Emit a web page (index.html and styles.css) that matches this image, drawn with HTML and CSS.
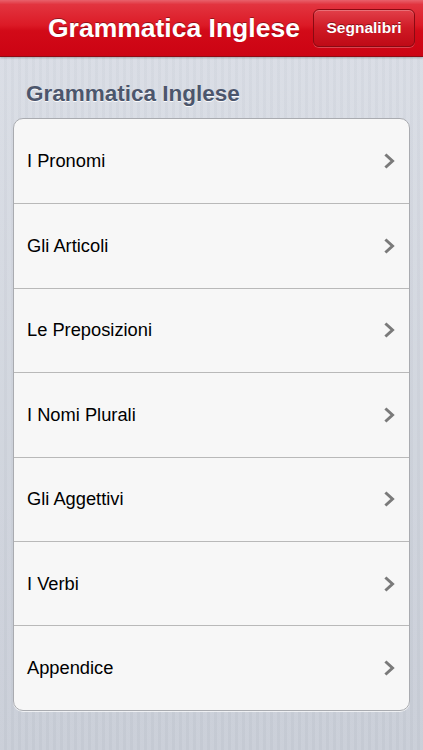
FILE: index.html
```html
<!DOCTYPE html>
<html>
<head>
<meta charset="utf-8">
<link rel="stylesheet" href="styles.css">
</head>
<body>
<div class="screen">
  <header class="navbar">
    <h1 class="nav-title">Grammatica Inglese</h1>
    <button class="nav-btn">Segnalibri</button>
  </header>
  <main class="content">
    <h2 class="section-title">Grammatica Inglese</h2>
    <ul class="group">
      <li class="row"><span>I Pronomi</span><svg class="chev" viewBox="0 0 12 16"><path d="M2.5 2.5 L8.5 8 L2.5 13.5" /></svg></li>
      <li class="row"><span>Gli Articoli</span><svg class="chev" viewBox="0 0 12 16"><path d="M2.5 2.5 L8.5 8 L2.5 13.5" /></svg></li>
      <li class="row"><span>Le Preposizioni</span><svg class="chev" viewBox="0 0 12 16"><path d="M2.5 2.5 L8.5 8 L2.5 13.5" /></svg></li>
      <li class="row"><span>I Nomi Plurali</span><svg class="chev" viewBox="0 0 12 16"><path d="M2.5 2.5 L8.5 8 L2.5 13.5" /></svg></li>
      <li class="row"><span>Gli Aggettivi</span><svg class="chev" viewBox="0 0 12 16"><path d="M2.5 2.5 L8.5 8 L2.5 13.5" /></svg></li>
      <li class="row"><span>I Verbi</span><svg class="chev" viewBox="0 0 12 16"><path d="M2.5 2.5 L8.5 8 L2.5 13.5" /></svg></li>
      <li class="row"><span>Appendice</span><svg class="chev" viewBox="0 0 12 16"><path d="M2.5 2.5 L8.5 8 L2.5 13.5" /></svg></li>
    </ul>
  </main>
</div>
</body>
</html>
```
FILE: styles.css
```css
* { box-sizing: border-box; }
html, body { margin: 0; padding: 0; }
body {
  width: 423px;
  height: 750px;
  overflow: hidden;
  font-family: "Liberation Sans", Arial, sans-serif;
}
.screen {
  width: 423px;
  height: 750px;
  display: flex;
  flex-direction: column;
  background-color: #cfd3dc;
  background-image:
    repeating-linear-gradient(90deg, rgba(255,255,255,0.07) 0 4px, rgba(0,0,0,0.012) 4px 7px),
    linear-gradient(180deg, #d9dde5 0%, #c7ccd6 100%);
}
.navbar {
  height: 57px;
  flex: none;
  display: flex;
  align-items: center;
  justify-content: space-between;
  padding: 0 8px 0 48px;
  background: linear-gradient(180deg, #e8616b 0%, #e2343f 8%, #dc1a26 45%, #d20a18 55%, #cc0313 100%);
  border-bottom: 1px solid #8e0a12;
  box-shadow: 0 1px 2px rgba(0,0,0,0.25);
}
.nav-title {
  margin: 0;
  color: #fff;
  font-size: 26.5px;
  font-weight: bold;
  text-shadow: 0 -1px 0 rgba(0,0,0,0.35);
}
.nav-btn {
  width: 102px;
  height: 38px;
  border: 1px solid #8a0a12;
  border-radius: 6px;
  background: linear-gradient(180deg, #e2404a 0%, #cf1a25 50%, #bf0a16 100%);
  box-shadow: inset 0 1px 0 rgba(255,255,255,0.25), 0 1px 0 rgba(255,255,255,0.25);
  color: #fff;
  font-family: "Liberation Sans", Arial, sans-serif;
  font-size: 15.5px;
  font-weight: bold;
  text-shadow: 0 -1px 0 rgba(0,0,0,0.4);
  padding: 0;
}
.content {
  padding: 20px 13px 0 13px;
}
.section-title {
  margin: 0 0 10px 13px;
  height: 31px;
  line-height: 34px;
  font-size: 22.5px;
  font-weight: bold;
  color: #4c566c;
  text-shadow: 0 1px 0 rgba(255,255,255,0.9);
}
.group {
  list-style: none;
  margin: 0;
  padding: 0;
  background: #f7f7f7;
  border: 1px solid #a9abb0;
  border-radius: 10px;
  box-shadow: 0 1px 0 rgba(255,255,255,0.7);
  overflow: hidden;
}
.row {
  height: 84.4px;
  display: flex;
  align-items: center;
  justify-content: space-between;
  padding: 0 13px 0 13px;
  font-size: 18.3px;
  color: #000;
  border-top: 1px solid #b9b9b9;
}
.row:first-child { border-top: none; }
.chev {
  width: 12px;
  height: 16px;
  fill: none;
  stroke: #7a7a7a;
  stroke-width: 3;
  stroke-linecap: square;
  stroke-linejoin: miter;
}
```
